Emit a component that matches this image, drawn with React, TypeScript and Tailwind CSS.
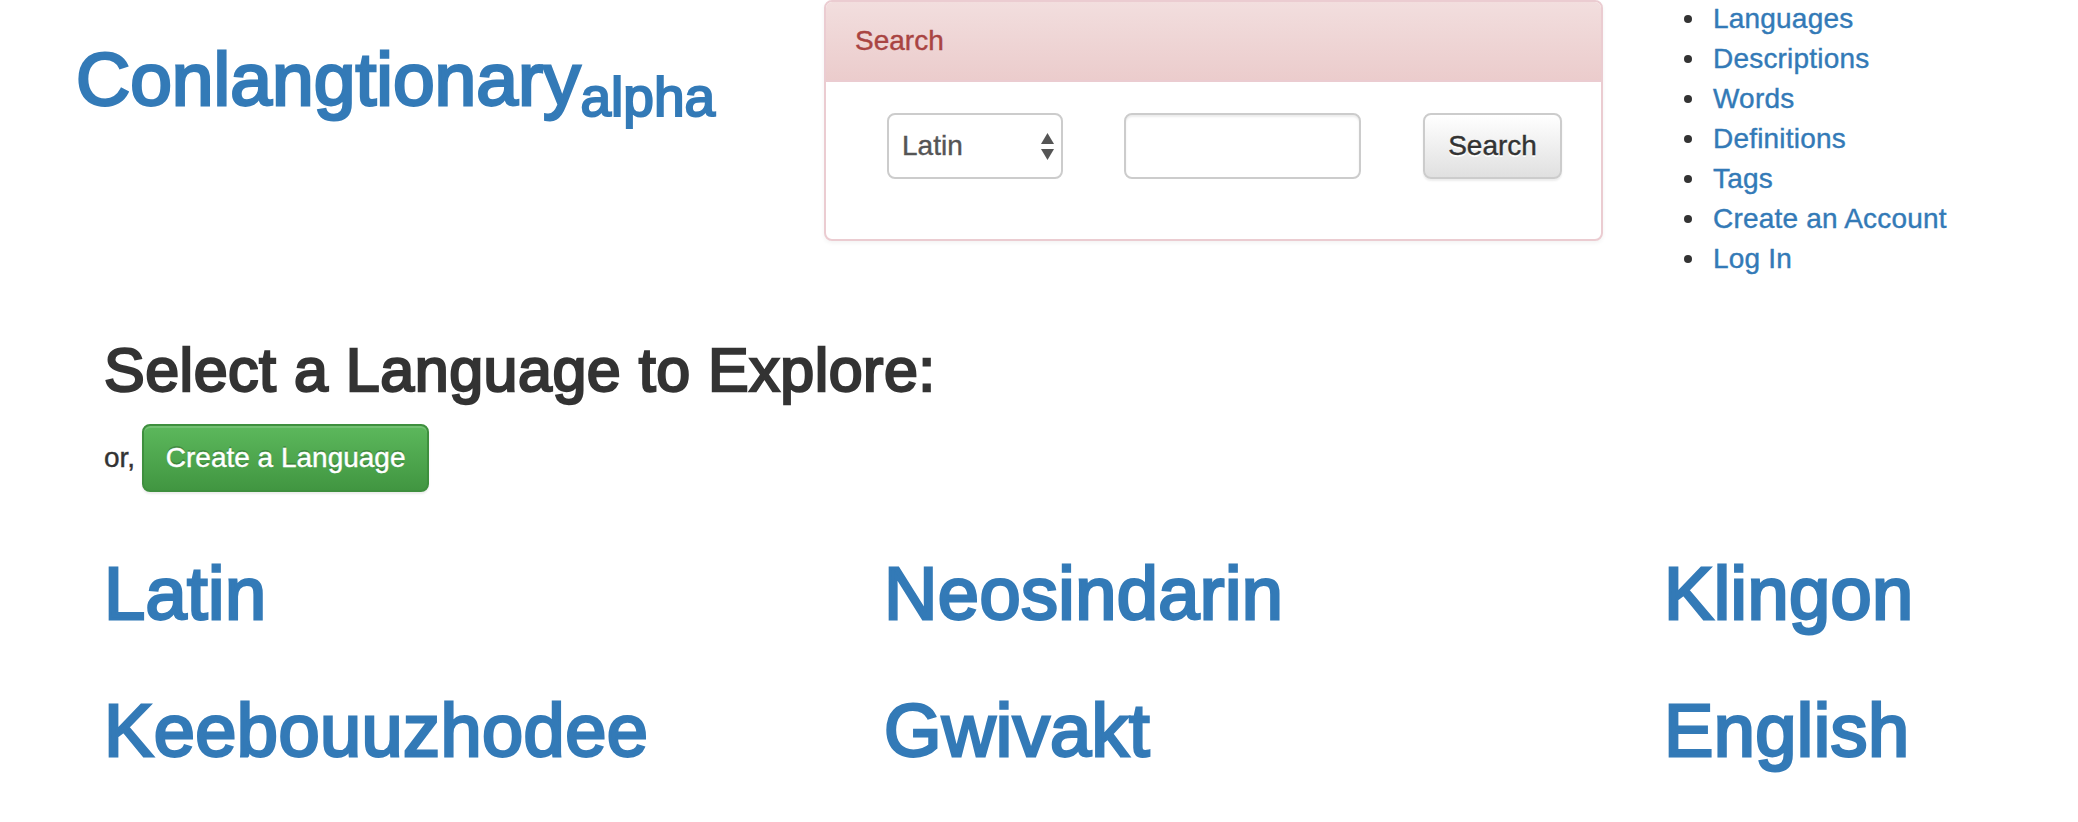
const navLinks = [
  "Languages",
  "Descriptions",
  "Words",
  "Definitions",
  "Tags",
  "Create an Account",
  "Log In",
];

const languages = [
  "Latin",
  "Neosindarin",
  "Klingon",
  "Keebouuzhodee",
  "Gwivakt",
  "English",
];

function SearchPanel() {
  return (
    <div className="w-[779px] shrink-0 overflow-hidden rounded-[8px] border-2 border-[#ebccd1] bg-white shadow-[0_2px_4px_rgba(0,0,0,0.05)]">
      <div className="border-b-2 border-[#ebccd1] bg-linear-to-b from-[#f2dede] to-[#ebcccc] px-[29px] py-[19px] text-[28px] leading-[40px] text-[#a94442]">
        Search
      </div>
      <div className="flex items-center pl-[61px] pt-[31px] pb-[60px]">
        {/* select box, drawn so it looks like Safari's */}
        <div className="flex h-[66px] w-[176px] items-center justify-between rounded-[8px] border-2 border-[#ccc] bg-white pl-[13px] pr-[7px] text-[28px] text-[#555]">
          <span>Latin</span>
          <svg width="13" height="27" viewBox="0 0 13 27">
            <path d="M6.5 0 L13 11 H0 Z" fill="#555" />
            <path d="M0 16 H13 L6.5 27 Z" fill="#555" />
          </svg>
        </div>
        <input
          type="text"
          className="ml-[61px] h-[66px] w-[237px] rounded-[8px] border-2 border-[#ccc] bg-white px-[24px] text-[28px] shadow-[inset_0_2px_2px_rgba(0,0,0,0.075)] outline-none"
        />
        <button className="ml-[62px] h-[66px] w-[139px] rounded-[8px] border-2 border-[#ccc] bg-linear-to-b from-white to-[#e0e0e0] text-[28px] text-[#333] shadow-[inset_0_2px_0_rgba(255,255,255,0.15),0_2px_2px_rgba(0,0,0,0.075)] [text-shadow:0_2px_0_#fff]">
          Search
        </button>
      </div>
    </div>
  );
}

export default function App() {
  return (
    <div className="min-h-screen bg-white font-['Liberation_Sans',Arial,sans-serif] text-[#333] [-webkit-text-stroke:0.4px_currentColor]">
      <header className="flex items-start">
        <div className="w-[824px] shrink-0 pl-[76px] pt-[38px]">
          <h1 className="whitespace-nowrap text-[75px] leading-[82px] text-[#337ab7] [-webkit-text-stroke:2.8px_currentColor]">
            Conlangtionary
            <span className="align-[-11px] text-[55px] leading-none [-webkit-text-stroke:2.2px_currentColor]">
              alpha
            </span>
          </h1>
        </div>

        <SearchPanel />

        <ul className="-mt-px pl-[81px]">
          {navLinks.map((label) => (
            <li
              key={label}
              className="flex items-center gap-[21px] text-[28px] leading-[40px] tracking-[0.2px]"
            >
              <span className="h-[8px] w-[8px] rounded-full bg-[#333]" />
              <a href="#" className="text-[#337ab7]">
                {label}
              </a>
            </li>
          ))}
        </ul>
      </header>

      <main className="pl-[104px] pt-[58px]">
        <h2 className="text-[61px] leading-[67px] tracking-[0.5px] [-webkit-text-stroke:2.4px_currentColor]">
          Select a Language to Explore:
        </h2>
        <div className="mt-[20px] flex items-baseline gap-[7px] text-[28px] leading-[40px]">
          <span>or,</span>
          <button className="h-[68px] w-[287px] rounded-[8px] border-2 border-[#3e8f3e] bg-linear-to-b from-[#5cb85c] to-[#419641] py-[12px] text-center text-white shadow-[inset_0_2px_0_rgba(255,255,255,0.15),0_2px_2px_rgba(0,0,0,0.075)] [text-shadow:0_-2px_0_rgba(0,0,0,0.2)]">
            Create a Language
          </button>
        </div>

        <div className="mt-[61px] grid grid-cols-[780px_780px_1fr] gap-y-[56px]">
          {languages.map((name) => (
            <h1
              key={name}
              className="text-[74px] leading-[81px] tracking-[0.4px] text-[#337ab7] [-webkit-text-stroke:2.8px_currentColor]"
            >
              <a href="#">{name}</a>
            </h1>
          ))}
        </div>
      </main>
    </div>
  );
}
